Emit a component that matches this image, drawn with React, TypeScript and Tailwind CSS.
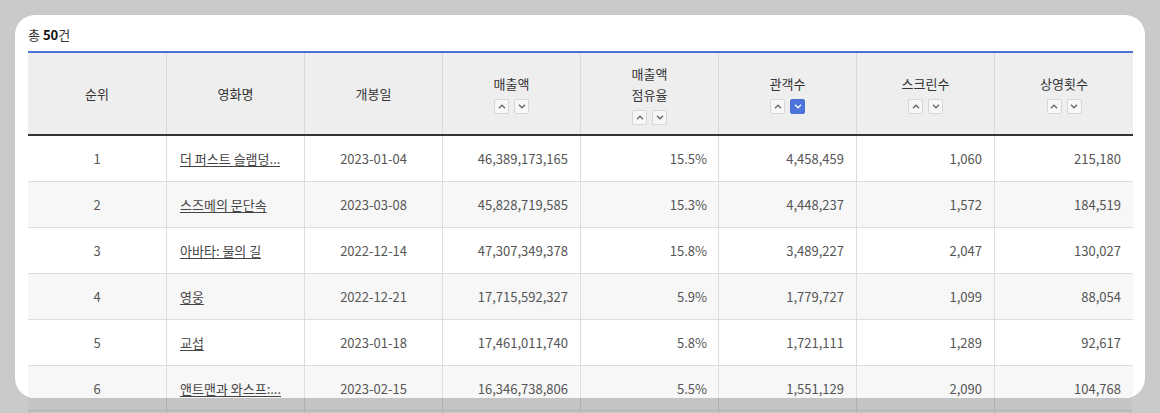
import React from 'react';

type Row = {
  rank: number;
  title: string;
  openDate: string;
  sales: string;
  share: string;
  audience: string;
  screens: string;
  shows: string;
};

const rows: Row[] = [
  { rank: 1, title: '더 퍼스트 슬램덩...', openDate: '2023-01-04', sales: '46,389,173,165', share: '15.5%', audience: '4,458,459', screens: '1,060', shows: '215,180' },
  { rank: 2, title: '스즈메의 문단속', openDate: '2023-03-08', sales: '45,828,719,585', share: '15.3%', audience: '4,448,237', screens: '1,572', shows: '184,519' },
  { rank: 3, title: '아바타: 물의 길', openDate: '2022-12-14', sales: '47,307,349,378', share: '15.8%', audience: '3,489,227', screens: '2,047', shows: '130,027' },
  { rank: 4, title: '영웅', openDate: '2022-12-21', sales: '17,715,592,327', share: '5.9%', audience: '1,779,727', screens: '1,099', shows: '88,054' },
  { rank: 5, title: '교섭', openDate: '2023-01-18', sales: '17,461,011,740', share: '5.8%', audience: '1,721,111', screens: '1,289', shows: '92,617' },
  { rank: 6, title: '앤트맨과 와스프:...', openDate: '2023-02-15', sales: '16,346,738,806', share: '5.5%', audience: '1,551,129', screens: '2,090', shows: '104,768' },
];

const cols = 'grid grid-cols-[repeat(7,138px)_1fr]';

function SortButton({ dir, active = false }: { dir: 'up' | 'down'; active?: boolean }) {
  return (
    <span
      className={
        active
          ? 'flex h-[15px] w-[15px] items-center justify-center rounded-[2px] border border-[#4a70d4] bg-[#4d74d9]'
          : 'flex h-[15px] w-[15px] items-center justify-center rounded-[2px] border border-[#d6d6d6] bg-[#f7f7f7]'
      }
    >
      <svg width="8" height="5" viewBox="0 0 8 5" fill="none">
        <polyline
          points={dir === 'up' ? '1,4.2 4,1.2 7,4.2' : '1,0.8 4,3.8 7,0.8'}
          stroke={active ? '#ffffff' : '#666666'}
          strokeWidth="1.3"
        />
      </svg>
    </span>
  );
}

function SortPair({ activeDown = false }: { activeDown?: boolean }) {
  return (
    <div className="mt-[5px] flex justify-center gap-[5px]">
      <SortButton dir="up" />
      <SortButton dir="down" active={activeDown} />
    </div>
  );
}

function HeadCell({ children, first = false }: { children: React.ReactNode; first?: boolean }) {
  return (
    <div
      className={
        first
          ? 'flex flex-col items-center justify-center text-center'
          : 'flex flex-col items-center justify-center border-l border-[#d9d9d9] text-center'
      }
    >
      {children}
    </div>
  );
}

export default function App() {
  return (
    <div
      className="h-[413px] w-[1160px] overflow-hidden bg-[#cacaca] px-[15px] pt-[15px]"
      style={{ fontFamily: '"Noto Sans CJK KR", "Noto Sans", sans-serif' }}
    >
      <div className="h-[383px] overflow-hidden rounded-[20px] bg-white pl-[13px] pr-[12px] pt-[11px]">
        {/* Total count */}
        <p className="mb-[7px] h-[18px] text-[13px] leading-[18px] text-[#333]">
          총 <b className="font-bold text-[#111]">50</b>건
        </p>

        <div className="border-t-2 border-[#4b72d6]">
          {/* Header */}
          <div className={`${cols} h-[83px] border-b-2 border-[#333] bg-[#eeeeee] text-[13px] leading-[21px] text-[#333]`}>
            <HeadCell first>순위</HeadCell>
            <HeadCell>영화명</HeadCell>
            <HeadCell>개봉일</HeadCell>
            <HeadCell>
              매출액
              <SortPair />
            </HeadCell>
            <HeadCell>
              매출액
              <br />
              점유율
              <SortPair />
            </HeadCell>
            <HeadCell>
              관객수
              <SortPair activeDown />
            </HeadCell>
            <HeadCell>
              스크린수
              <SortPair />
            </HeadCell>
            <HeadCell>
              상영횟수
              <SortPair />
            </HeadCell>
          </div>

          {/* Body */}
          {rows.map((r, i) => (
            <div
              key={r.rank}
              className={
                i % 2 === 1
                  ? `${cols} h-[46px] border-b border-[#dddddd] bg-[#f7f7f7] text-[13px] text-[#555]`
                  : `${cols} h-[46px] border-b border-[#dddddd] bg-white text-[13px] text-[#555]`
              }
            >
              <div className="flex items-center justify-center">{r.rank}</div>
              <div className="flex items-center border-l border-[#dddddd] px-[13px]">
                <a className="truncate text-[#444] underline underline-offset-2">{r.title}</a>
              </div>
              <div className="flex items-center justify-center border-l border-[#dddddd]">{r.openDate}</div>
              <div className="flex items-center justify-end border-l border-[#dddddd] px-[12px]">{r.sales}</div>
              <div className="flex items-center justify-end border-l border-[#dddddd] px-[11px]">{r.share}</div>
              <div className="flex items-center justify-end border-l border-[#dddddd] px-[12px]">{r.audience}</div>
              <div className="flex items-center justify-end border-l border-[#dddddd] px-[12px]">{r.screens}</div>
              <div className="flex items-center justify-end border-l border-[#dddddd] px-[12px]">{r.shows}</div>
            </div>
          ))}
        </div>
      </div>

      {/* Dimmed table continuing below the card */}
      <div className={`mx-[13px] ${cols}`}>
        {Array.from({ length: 8 }).map((_, i) => (
          <div
            key={i}
            className={
              i === 0
                ? 'h-[13px] border-b border-[#b0b0b0] bg-[#c4c4c4]'
                : 'h-[13px] border-b border-l border-[#b0b0b0] bg-[#c4c4c4]'
            }
          />
        ))}
        {Array.from({ length: 8 }).map((_, i) => (
          <div
            key={'n' + i}
            className={i === 0 ? 'h-[2px] bg-[#c4c4c4]' : 'h-[2px] border-l border-[#b0b0b0] bg-[#c4c4c4]'}
          />
        ))}
      </div>
    </div>
  );
}
